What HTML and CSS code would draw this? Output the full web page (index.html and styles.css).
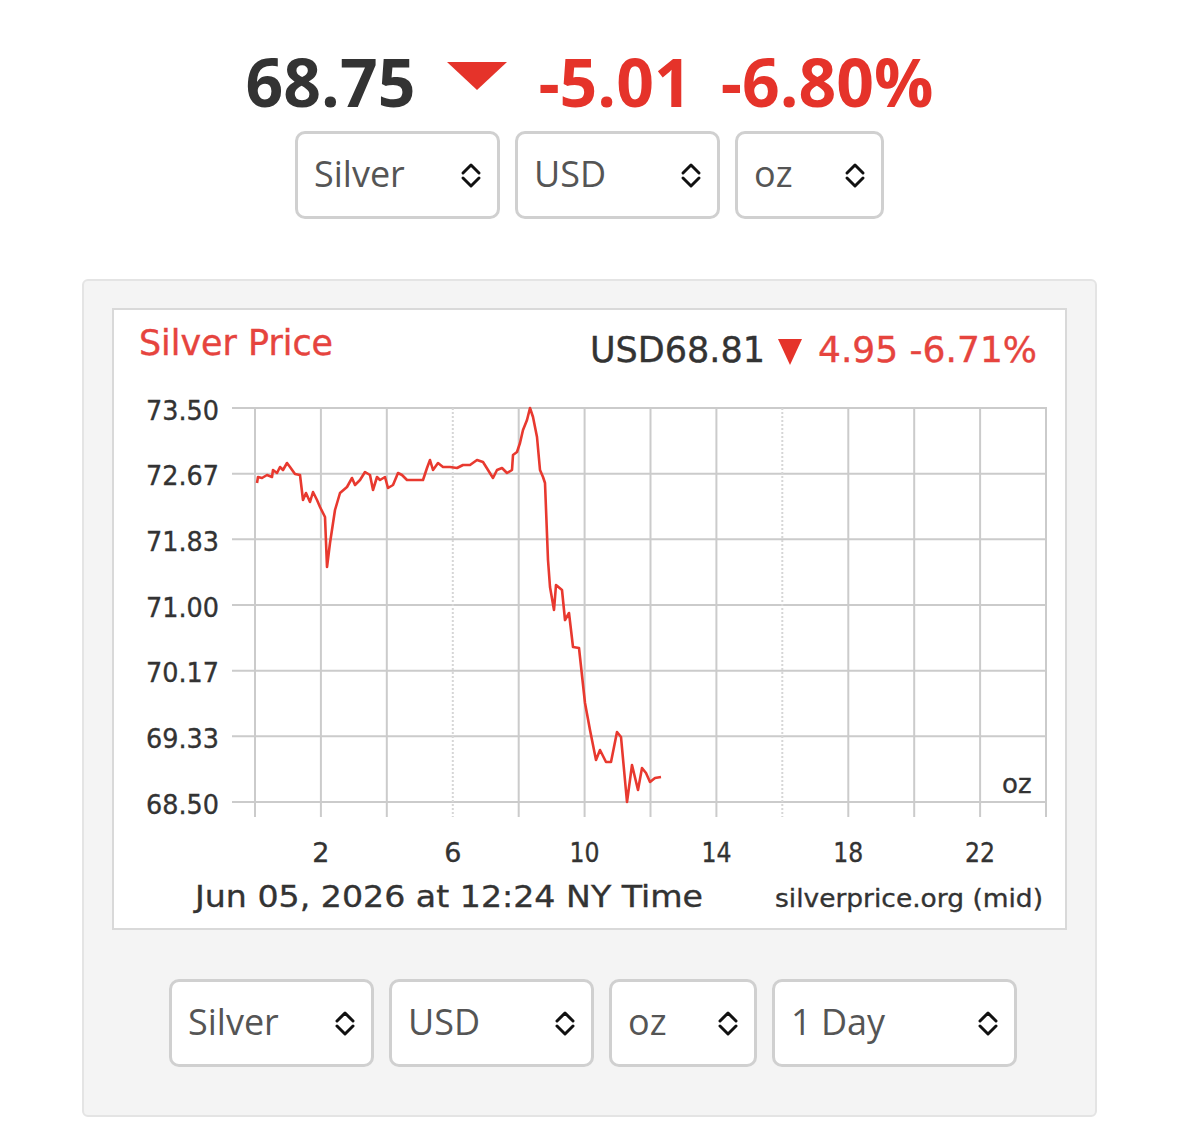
FILE: index.html
```html
<!DOCTYPE html>
<html lang="en">
<head>
<meta charset="utf-8">
<title>Silver Price</title>
<link rel="stylesheet" href="styles.css">
</head>
<body>
<div class="quote">
  <span class="price">68.75</span>
  <svg class="down" width="60" height="28" viewBox="0 0 60 28"><polygon points="0,0 60,0 30,28" /></svg>
  <span class="chg">-5.01</span>
  <span class="chg pct">-6.80%</span>
</div>

<div class="selects">
  <div class="sel w-metal"><span>Silver</span><svg class="chev" width="22" height="28" viewBox="0 0 22 28"><path d="M3 12 L11 4 L19 12 M3 17 L11 25 L19 17"/></svg></div>
  <div class="sel w-cur"><span>USD</span><svg class="chev" width="22" height="28" viewBox="0 0 22 28"><path d="M3 12 L11 4 L19 12 M3 17 L11 25 L19 17"/></svg></div>
  <div class="sel w-unit"><span>oz</span><svg class="chev" width="22" height="28" viewBox="0 0 22 28"><path d="M3 12 L11 4 L19 12 M3 17 L11 25 L19 17"/></svg></div>
</div>

<div class="panel">
  <div class="chart">
    <svg class="plot" width="951" height="618" viewBox="114 310 951 618">
      <g class="grid">
        <line x1="232" y1="408" x2="1047" y2="408"/>
        <line x1="232" y1="473.7" x2="1047" y2="473.7"/>
        <line x1="232" y1="539.3" x2="1047" y2="539.3"/>
        <line x1="232" y1="605" x2="1047" y2="605"/>
        <line x1="232" y1="670.7" x2="1047" y2="670.7"/>
        <line x1="232" y1="736.3" x2="1047" y2="736.3"/>
        <line x1="232" y1="802" x2="1047" y2="802"/>
        <line x1="255" y1="408" x2="255" y2="817"/>
        <line x1="320.9" y1="408" x2="320.9" y2="817"/>
        <line x1="386.8" y1="408" x2="386.8" y2="817"/>
        <line class="dot" x1="452.8" y1="408" x2="452.8" y2="817"/>
        <line x1="518.7" y1="408" x2="518.7" y2="817"/>
        <line x1="584.6" y1="408" x2="584.6" y2="817"/>
        <line x1="650.5" y1="408" x2="650.5" y2="817"/>
        <line x1="716.4" y1="408" x2="716.4" y2="817"/>
        <line class="dot" x1="782.3" y1="408" x2="782.3" y2="817"/>
        <line x1="848.3" y1="408" x2="848.3" y2="817"/>
        <line x1="914.2" y1="408" x2="914.2" y2="817"/>
        <line x1="980.1" y1="408" x2="980.1" y2="817"/>
        <line x1="1046" y1="408" x2="1046" y2="817"/>
      </g>
      <text class="title" x="139" y="355" textLength="194" lengthAdjust="spacingAndGlyphs">Silver Price</text>
      <text class="cur" x="590" y="362" textLength="175" lengthAdjust="spacingAndGlyphs">USD68.81</text>
      <polygon class="tri" points="778,339 802,339 790,365"/>
      <text class="curchg" x="818" y="362" textLength="219" lengthAdjust="spacingAndGlyphs">4.95 -6.71%</text>

      <g class="ylab">
        <text x="219" y="419.5" textLength="73" lengthAdjust="spacingAndGlyphs">73.50</text>
        <text x="219" y="485.2" textLength="73" lengthAdjust="spacingAndGlyphs">72.67</text>
        <text x="219" y="550.8" textLength="73" lengthAdjust="spacingAndGlyphs">71.83</text>
        <text x="219" y="616.5" textLength="73" lengthAdjust="spacingAndGlyphs">71.00</text>
        <text x="219" y="682.2" textLength="73" lengthAdjust="spacingAndGlyphs">70.17</text>
        <text x="219" y="747.8" textLength="73" lengthAdjust="spacingAndGlyphs">69.33</text>
        <text x="219" y="813.5" textLength="73" lengthAdjust="spacingAndGlyphs">68.50</text>
      </g>
      <g class="xlab">
        <text x="320.9" y="862">2</text>
        <text x="452.8" y="862">6</text>
        <text x="584.6" y="862" textLength="30" lengthAdjust="spacingAndGlyphs">10</text>
        <text x="716.4" y="862" textLength="30" lengthAdjust="spacingAndGlyphs">14</text>
        <text x="848.3" y="862" textLength="30" lengthAdjust="spacingAndGlyphs">18</text>
        <text x="980.1" y="862" textLength="30" lengthAdjust="spacingAndGlyphs">22</text>
      </g>
      <text class="unit" x="1002" y="793">oz</text>
      <text class="foot" x="195" y="907" textLength="508" lengthAdjust="spacingAndGlyphs">Jun 05, 2026 at 12:24 NY Time</text>
      <text class="src" x="775" y="907" textLength="268" lengthAdjust="spacingAndGlyphs">silverprice.org (mid)</text>

      <polyline class="line" points="257,483 258,477 262,478 267,475 272,477 273,470 277,473 280,467 283,470 287,463 290,467 295,474 300,475 303,500 306,493 310,502 313,492 317,500 320,507 325,517 327,567 330,543 335,510 340,493 347,487 352,478 355,485 360,480 365,472 370,475 373,490 377,477 380,480 385,477 388,488 393,485 398,473 402,475 407,480 413,480 423,480 427,468 430,460 433,470 438,463 443,467 450,467 457,468 463,465 470,465 477,460 483,462 488,470 493,478 497,470 502,468 507,473 512,470 513,455 517,452 520,443 523,430 527,420 530,408 533,417 537,437 540,470 543,477 545,483 548,560 550,587 554,610 556,585 562,590 565,620 569,613 573,647 579,648 585,703 590,730 596,760 600,750 606,762 611,762 617,732 621,737 627,802 632,765 638,790 642,768 646,773 650,782 655,778 661,777"/>
    </svg>
  </div>

  <div class="selects bottom">
    <div class="sel w-metal"><span>Silver</span><svg class="chev" width="22" height="28" viewBox="0 0 22 28"><path d="M3 12 L11 4 L19 12 M3 17 L11 25 L19 17"/></svg></div>
    <div class="sel w-cur"><span>USD</span><svg class="chev" width="22" height="28" viewBox="0 0 22 28"><path d="M3 12 L11 4 L19 12 M3 17 L11 25 L19 17"/></svg></div>
    <div class="sel w-unit2"><span>oz</span><svg class="chev" width="22" height="28" viewBox="0 0 22 28"><path d="M3 12 L11 4 L19 12 M3 17 L11 25 L19 17"/></svg></div>
    <div class="sel w-range"><span>1 Day</span><svg class="chev" width="22" height="28" viewBox="0 0 22 28"><path d="M3 12 L11 4 L19 12 M3 17 L11 25 L19 17"/></svg></div>
  </div>
</div>
</body>
</html>
```

FILE: styles.css
```css
html, body {
  margin: 0;
  padding: 0;
  background: #ffffff;
}

body {
  font-family: "Open Sans", "Liberation Sans", sans-serif;
  color: #333333;
}

.quote {
  display: flex;
  justify-content: center;
  align-items: flex-start;
  padding-top: 49px;
}

.price,
.chg {
  font-size: 66px;
  font-weight: 700;
  line-height: 65px;
}

.price {
  color: #333333;
}

.chg {
  color: #e5332a;
}

.chg.pct {
  margin-left: 29px;
}

.down {
  display: block;
  margin: 13px 31px 0 32px;
}

.down polygon {
  fill: #e5332a;
}

.selects {
  display: flex;
  justify-content: center;
  gap: 15px;
  margin-top: 17px;
}

.sel {
  box-sizing: border-box;
  flex: none;
  height: 88px;
  display: flex;
  align-items: center;
  justify-content: space-between;
  padding: 0 15px 0 16px;
  background: #ffffff;
  border: 3px solid #d0d0d0;
  border-radius: 10px;
  font-size: 36px;
  color: #555555;
}

.sel span {
  line-height: 1;
  padding-bottom: 2px;
}

.w-metal { width: 205px; }
.w-cur { width: 205px; }
.w-unit { width: 149px; }
.w-unit2 { width: 148px; }
.w-range { width: 245px; }

.chev {
  display: block;
  flex: none;
}

.chev path {
  fill: none;
  stroke: #111111;
  stroke-width: 3;
  stroke-linecap: round;
  stroke-linejoin: round;
}

.panel {
  margin: 60px 82px 0;
  padding: 27px 28px 48px;
  background: #f4f4f4;
  border: 2px solid #e4e4e4;
  border-radius: 6px;
}

.chart {
  background: #ffffff;
  border: 2px solid #d9d9d9;
}

.plot {
  display: block;
  font-family: "DejaVu Sans", Verdana, sans-serif;
}

.grid line {
  stroke: #cbcbcb;
  stroke-width: 2;
}

.grid line.dot {
  stroke: #d6d6d6;
  stroke-dasharray: 2 2;
}

.title {
  font-size: 35px;
  fill: #e6443e;
  stroke: #e6443e;
  stroke-width: 0.4;
}

.cur {
  font-size: 36px;
  fill: #333333;
  stroke: #333333;
  stroke-width: 0.4;
}

.tri {
  fill: #e5332a;
}

.curchg {
  font-size: 36px;
  fill: #e6443e;
  stroke: #e6443e;
  stroke-width: 0.4;
}

.ylab text,
.xlab text,
.unit,
.foot,
.src {
  fill: #333333;
  stroke: #333333;
  stroke-width: 0.35;
}

.ylab text {
  font-size: 27px;
  text-anchor: end;
}

.xlab text {
  font-size: 27px;
  text-anchor: middle;
}

.unit {
  font-size: 26px;
}

.foot {
  font-size: 31px;
}

.src {
  font-size: 25px;
}

.line {
  fill: none;
  stroke: #e8392f;
  stroke-width: 2.6;
  stroke-linejoin: round;
}

.selects.bottom {
  margin-top: 49px;
  padding-left: 7px;
}
```
